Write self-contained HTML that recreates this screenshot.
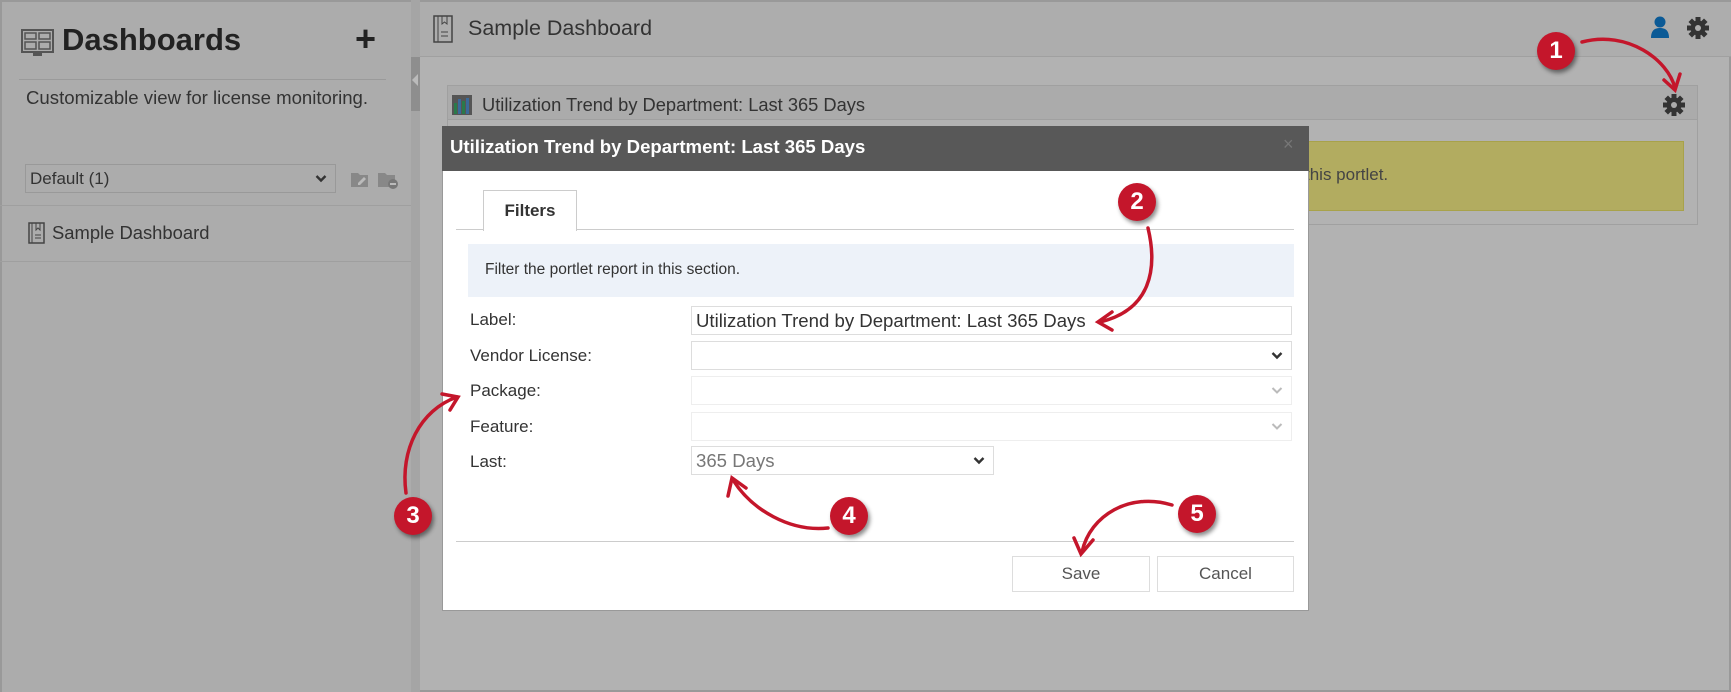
<!DOCTYPE html>
<html><head><meta charset="utf-8"><style>
*{box-sizing:border-box;margin:0;padding:0}
body{width:1731px;height:692px;overflow:hidden;font-family:"Liberation Sans",sans-serif;background:#b1b1b1;position:relative;color:#333}
.abs{position:absolute}
#side{left:0;top:0;width:411px;height:692px;background:#acacac;border-left:2px solid #999;border-top:2px solid #999}
#scr{left:411px;top:0;width:9px;height:692px;background:#a5a5a5}
#scrthumb{left:411px;top:57px;width:9px;height:54px;background:#8e8e8e}
#main{left:420px;top:0;width:1311px;height:692px;background:#b2b2b2;border-top:2px solid #999;border-right:2px solid #999;border-bottom:2px solid #999}
#topbar{left:420px;top:0;width:1311px;height:57px;background:#adadad;border-bottom:1px solid #a0a0a0;border-top:2px solid #999}
.inp{background:#fff;border:1px solid #ddd;height:29px;font-size:18px;padding-left:4px;line-height:27px;color:#333}
.lbl{left:470px;font-size:17px;color:#333}
.chev{position:absolute;right:8px;top:9px;width:12px;height:9px}
.btn{background:#fff;border:1px solid #ddd;height:36px;text-align:center;line-height:34px;font-size:17px;color:#555}
.circ{width:38px;height:38px;border-radius:50%;background:#c4162b;color:#fff;font-weight:bold;font-size:24px;text-align:center;line-height:38px;box-shadow:2px 3px 4px rgba(0,0,0,.45)}
</style></head><body>
<div id="side" class="abs"></div>
<svg class="abs" style="left:21px;top:29px" width="33" height="30" viewBox="0 0 33 30"><rect x="1" y="1" width="31" height="22" fill="none" stroke="#555" stroke-width="2"/><rect x="4" y="4" width="11" height="6" fill="none" stroke="#555" stroke-width="1.5"/><rect x="18" y="4" width="11" height="6" fill="none" stroke="#555" stroke-width="1.5"/><rect x="4" y="13" width="11" height="7" fill="none" stroke="#555" stroke-width="1.5"/><rect x="18" y="13" width="11" height="7" fill="none" stroke="#555" stroke-width="1.5"/><rect x="12" y="24" width="9" height="3" fill="#555"/></svg>
<div class="abs" style="left:62px;top:22px;font-size:31px;font-weight:bold;color:#222">Dashboards</div>
<div class="abs" style="left:355px;top:18px;font-size:36px;font-weight:bold;color:#222">+</div>
<div class="abs" style="left:19px;top:79px;width:367px;height:1px;background:#9a9a9a"></div>
<div class="abs" style="left:26px;top:87px;font-size:18.6px;color:#333">Customizable view for license monitoring.</div>
<div class="abs inp" style="left:25px;top:164px;width:311px;height:29px;background:#acacac;border-color:#999;font-size:17px">Default (1)<svg class="chev" viewBox="0 0 12 9"><path d="M1.5 2l4.5 4.5L10.5 2" fill="none" stroke="#333" stroke-width="2.4"/></svg></div>
<svg class="abs" style="left:350px;top:169px" width="50" height="20"><path d="M1 4h7l2 2h8v12H1z" fill="#888"/><path d="M8 14l6-6 2 2-6 6H8z" fill="#bbb"/><path d="M28 4h7l2 2h8v12H28z" fill="#888"/><circle cx="43" cy="15" r="5" fill="#777"/><rect x="40" y="14" width="6" height="2" fill="#bbb"/></svg>
<div class="abs" style="left:0;top:205px;width:411px;height:1px;background:#9f9f9f"></div>
<svg class="abs" style="left:28px;top:222px" width="17" height="22"><rect x="1" y="1" width="15" height="20" fill="none" stroke="#444" stroke-width="1.5"/><line x1="4" y1="1" x2="4" y2="21" stroke="#444"/><path d="M8 1v7l2-2 2 2V1" fill="none" stroke="#444"/><line x1="7" y1="13" x2="13" y2="13" stroke="#444"/><line x1="7" y1="16" x2="13" y2="16" stroke="#444"/></svg>
<div class="abs" style="left:52px;top:222px;font-size:18.4px;color:#333">Sample Dashboard</div>
<div class="abs" style="left:0;top:261px;width:411px;height:1px;background:#9f9f9f"></div>
<div id="scr" class="abs"></div><div id="scrthumb" class="abs"></div>
<div class="abs" style="left:412px;top:74px;width:0;height:0;border-top:6px solid transparent;border-bottom:6px solid transparent;border-right:6px solid #bbb"></div>
<div id="main" class="abs"></div>
<div id="topbar" class="abs"></div>
<svg class="abs" style="left:433px;top:15px" width="20" height="28"><rect x="1" y="1" width="18" height="26" fill="none" stroke="#444" stroke-width="1.5"/><line x1="5" y1="1" x2="5" y2="27" stroke="#444"/><path d="M9 1v8l2.5-2 2.5 2V1" fill="none" stroke="#444"/><line x1="8" y1="17" x2="15" y2="17" stroke="#444"/><line x1="8" y1="21" x2="15" y2="21" stroke="#444"/></svg>
<div class="abs" style="left:468px;top:16px;font-size:21.5px;color:#333">Sample Dashboard</div>
<svg class="abs" style="left:1650px;top:16px" width="20" height="22"><circle cx="10" cy="6" r="5.5" fill="#0b5a96"/><path d="M1 22c0-8 4-10 9-10s9 2 9 10z" fill="#0b5a96"/></svg>
<svg class="abs" style="left:1687px;top:17px" width="22" height="22" viewBox="-11 -11 22 22"><g fill="#333"><circle r="7.5"/><rect x="-2.5" y="-11" width="5" height="22"/><rect x="-2.5" y="-11" width="5" height="22" transform="rotate(45)"/><rect x="-2.5" y="-11" width="5" height="22" transform="rotate(90)"/><rect x="-2.5" y="-11" width="5" height="22" transform="rotate(135)"/></g><circle r="3" fill="#adadad"/></svg>
<div class="abs" style="left:447px;top:85px;width:1251px;height:140px;border:1px solid #a0a0a0;background:#b2b2b2"></div>
<div class="abs" style="left:447px;top:85px;width:1251px;height:35px;background:#ababab;border:1px solid #a0a0a0"></div>
<svg class="abs" style="left:452px;top:95px" width="20" height="20"><rect width="20" height="20" fill="#555"/><rect x="2" y="8" width="3" height="11" fill="#2a7a4a"/><rect x="6" y="4" width="3" height="15" fill="#3a6a9a"/><rect x="10" y="6" width="3" height="13" fill="#2a7a4a"/><rect x="14" y="3" width="3" height="16" fill="#3a6a9a"/></svg>
<div class="abs" style="left:482px;top:94px;font-size:18.3px;color:#333">Utilization Trend by Department: Last 365 Days</div>
<svg class="abs" style="left:1663px;top:94px" width="22" height="22" viewBox="-11 -11 22 22"><g fill="#333"><circle r="7.5"/><rect x="-2.5" y="-11" width="5" height="22"/><rect x="-2.5" y="-11" width="5" height="22" transform="rotate(45)"/><rect x="-2.5" y="-11" width="5" height="22" transform="rotate(90)"/><rect x="-2.5" y="-11" width="5" height="22" transform="rotate(135)"/></g><circle r="3" fill="#ababab"/></svg>
<div class="abs" style="left:1200px;top:141px;width:484px;height:70px;background:#b2ac60;border:1px solid #a8a24a"></div>
<div class="abs" style="left:1305px;top:165px;font-size:17px;color:#444">this portlet.</div>
<div class="abs" style="left:442px;top:126px;width:867px;height:485px;background:#fff;border:1px solid #999"></div>
<div class="abs" style="left:442px;top:126px;width:867px;height:45px;background:#585858"></div>
<div class="abs" style="left:450px;top:136px;font-size:18.6px;font-weight:bold;color:#fff">Utilization Trend by Department: Last 365 Days</div>
<div class="abs" style="left:1283px;top:134px;font-size:18px;color:#777">×</div>
<div class="abs" style="left:456px;top:229px;width:838px;height:1px;background:#ccc"></div>
<div class="abs" style="left:483px;top:190px;width:94px;height:41px;background:#fff;border:1px solid #ccc;border-bottom:none;text-align:center;line-height:40px;font-weight:bold;font-size:17px;color:#333">Filters</div>
<div class="abs" style="left:468px;top:244px;width:826px;height:53px;background:#edf2f9"></div>
<div class="abs" style="left:485px;top:261px;font-size:15.5px;color:#333">Filter the portlet report in this section.</div>
<div class="abs lbl" style="top:310px">Label:</div>
<div class="abs lbl" style="top:346px">Vendor License:</div>
<div class="abs lbl" style="top:381px">Package:</div>
<div class="abs lbl" style="top:417px">Feature:</div>
<div class="abs lbl" style="top:452px">Last:</div>
<div class="abs inp" style="left:691px;top:306px;width:601px;font-size:18.6px">Utilization Trend by Department: Last 365 Days</div>
<div class="abs inp" style="left:691px;top:341px;width:601px"><svg class="chev" viewBox="0 0 12 9"><path d="M1.5 2l4.5 4.5L10.5 2" fill="none" stroke="#333" stroke-width="2.4"/></svg></div>
<div class="abs inp" style="left:691px;top:376px;width:601px;border-color:#eee"><svg class="chev" viewBox="0 0 12 9"><path d="M1.5 2l4.5 4.5L10.5 2" fill="none" stroke="#bbb" stroke-width="2"/></svg></div>
<div class="abs inp" style="left:691px;top:412px;width:601px;border-color:#eee"><svg class="chev" viewBox="0 0 12 9"><path d="M1.5 2l4.5 4.5L10.5 2" fill="none" stroke="#bbb" stroke-width="2"/></svg></div>
<div class="abs inp" style="left:691px;top:446px;width:303px;color:#777;font-size:18.6px">365 Days<svg class="chev" viewBox="0 0 12 9"><path d="M1.5 2l4.5 4.5L10.5 2" fill="none" stroke="#333" stroke-width="2.4"/></svg></div>
<div class="abs" style="left:456px;top:541px;width:838px;height:1px;background:#ccc"></div>
<div class="abs btn" style="left:1012px;top:556px;width:138px">Save</div>
<div class="abs btn" style="left:1157px;top:556px;width:137px">Cancel</div>
<svg class="abs" style="left:0;top:0" width="1731" height="692"><g fill="none" stroke="#c4162b" stroke-width="3.5" stroke-linecap="round">
<path d="M1582 42C1628 30 1668 60 1675 88"/><path d="M1664 80L1675 90L1680 74"/>
<path d="M1148 228C1158 270 1150 310 1100 322"/><path d="M1112 312L1098 322L1112 330"/>
<path d="M406 493C400 450 420 410 457 397"/><path d="M442 394L458 397L450 410"/>
<path d="M828 528C790 532 752 510 733 480"/><path d="M728 496L732 478L746 488"/>
<path d="M1172 505C1130 492 1090 515 1082 552"/><path d="M1074 538L1081 554L1093 540"/>
</g></svg>
<div class="abs circ" style="left:1537px;top:32px">1</div>
<div class="abs circ" style="left:1118px;top:183px">2</div>
<div class="abs circ" style="left:394px;top:497px">3</div>
<div class="abs circ" style="left:830px;top:497px">4</div>
<div class="abs circ" style="left:1178px;top:495px">5</div>
</body></html>
